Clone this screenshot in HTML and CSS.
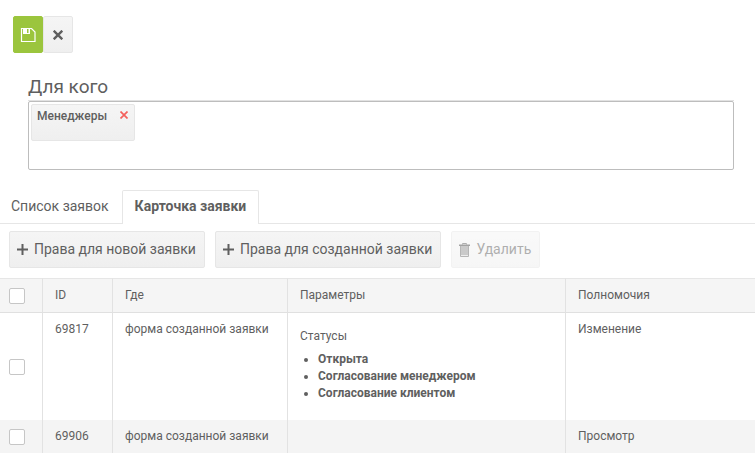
FILE: index.html
```html
<!DOCTYPE html>
<html lang="ru">
<head>
    <meta charset="UTF-8">
    <meta name="viewport" content="width=device-width, initial-scale=1.0">
    <title>Права доступа</title>
    <link rel="stylesheet" href="styles.css">
</head>
<body>
    <!-- сохранить / закрыть -->
    <div class="toolbar">
        <button class="btn btn-save" type="button" aria-label="Сохранить">
            <svg width="16" height="14" viewBox="0 0 16 14">
                <path d="M1.500 .5H11.500l3.500 3.500v9.500H1.500z" fill="none" stroke="#fff" stroke-width="1.200"/>
                <path d="M3 0h7v6H3z" fill="#fff"/>
                <path d="M7 1h1.500v4H7z" fill="#9bc53d"/>
            </svg>
        </button>
        <button class="btn btn-close" type="button" aria-label="Закрыть">
            <svg width="10" height="10" viewBox="0 0 10 10">
                <path d="M.7 .7l8.600 8.600M9.300 .7L.7 9.300" stroke="#5f5f5f" stroke-width="2.400"/>
            </svg>
        </button>
    </div>

    <!-- кому выдаются права -->
    <div class="target">
        <h1>Для кого</h1>
        <div class="target-box">
            <div class="chip">
                <span>Менеджеры</span>
                <button type="button" aria-label="Убрать">
                    <svg width="8" height="8" viewBox="0 0 8 8">
                        <path d="M.5 .5l7 7M7.500 .5l-7 7" stroke="#f4605c" stroke-width="1.700"/>
                    </svg>
                </button>
            </div>
        </div>
    </div>

    <div class="tabs">
        <a class="tab" href="#list">Список заявок</a>
        <a class="tab active" href="#card">Карточка заявки</a>
    </div>

    <div class="actions">
        <button class="btn" type="button">
            <svg width="11" height="11" viewBox="0 0 11 11">
                <path d="M0 5.500h11M5.500 0v11" stroke="#5f5f5f" stroke-width="2"/>
            </svg>
            Права для новой заявки
        </button>
        <button class="btn" type="button">
            <svg width="11" height="11" viewBox="0 0 11 11">
                <path d="M0 5.500h11M5.500 0v11" stroke="#5f5f5f" stroke-width="2"/>
            </svg>
            Права для созданной заявки
        </button>
        <button class="btn btn-delete" type="button" disabled>
            <svg width="11" height="14" viewBox="0 0 11 14">
                <path d="M3.500 1.500v-1h4v1" fill="none" stroke="#5f5f5f"/>
                <path d="M0 1.500h11V3H0z" fill="#4a4a4a"/>
                <path d="M1 3h9v9.500H1z" fill="#969696"/>
                <path d="M1.500 3v10.500h8V3" fill="none" stroke="#6f6f6f"/>
                <path d="M2 12.500h7" stroke="#ddd"/>
            </svg>
            Удалить
        </button>
    </div>

    <table class="grid">
        <colgroup>
            <col class="col-check">
            <col class="col-id">
            <col class="col-where">
            <col class="col-params">
            <col>
        </colgroup>
        <thead>
            <tr>
                <th class="check"><input type="checkbox" aria-label="Выбрать все"></th>
                <th>ID</th>
                <th>Где</th>
                <th>Параметры</th>
                <th>Полномочия</th>
            </tr>
        </thead>
        <tbody>
            <tr>
                <td class="check"><input type="checkbox" aria-label="Выбрать 69817"></td>
                <td>69817</td>
                <td>форма созданной заявки</td>
                <td>
                    <div class="params">
                        Статусы
                        <ul>
                            <li>Открыта</li>
                            <li>Согласование менеджером</li>
                            <li>Согласование клиентом</li>
                        </ul>
                    </div>
                </td>
                <td>Изменение</td>
            </tr>
            <tr>
                <td class="check"><input type="checkbox" aria-label="Выбрать 69906"></td>
                <td>69906</td>
                <td>форма созданной заявки</td>
                <td></td>
                <td>Просмотр</td>
            </tr>
        </tbody>
    </table>
</body>
</html>
```

FILE: styles.css
```css
* {
    margin: 0;
    padding: 0;
    box-sizing: border-box;
}

body {
    font-family: Roboto, "Liberation Sans", sans-serif;
    font-size: 12px;
    line-height: 17px;
    color: #5f5f5f;
    background-color: #fff;
}

/* кнопки */
.btn {
    display: flex;
    align-items: center;
    gap: 6px;
    height: 37px;
    padding: 0 8px 0 7px;
    font: inherit;
    font-size: 14px;
    color: inherit;
    white-space: nowrap;
    background: linear-gradient(#f5f5f5, #efefef);
    border: 1px solid #e6e6e6;
    border-radius: 2px;
}

.toolbar {
    display: flex;
    padding: 16px 13px 0;
}

.btn-save,
.btn-close {
    width: 30px;
    padding: 0;
    justify-content: center;
}

.btn-save {
    background: #9bc53d;
    border-color: #9bc53d;
}

.btn-delete {
    opacity: 0.5;
}

/* для кого */
.target {
    padding: 20px 21px 0 28px;
}

.target h1 {
    height: 28px;
    font-size: 19px;
    font-weight: normal;
    line-height: 27px;
    border-bottom: 1px solid #e2e2e2;
}

.target-box {
    min-height: 69px;
    padding: 2px;
    border: 1px solid #bdbdbd;
    border-radius: 2px;
}

.chip {
    display: inline-flex;
    align-items: flex-start;
    gap: 13px;
    height: 37px;
    padding: 3px 6px 0 5px;
    font-weight: 500;
    background: linear-gradient(#f5f5f5, #efefef);
    border: 1px solid #e6e6e6;
    border-radius: 2px;
}

.chip button {
    display: flex;
    padding-top: 3px;
    background: none;
    border: none;
}

/* вкладки */
.tabs {
    display: flex;
    margin-top: 20px;
    box-shadow: inset 0 -1px #e6e6e6;
}

.tab {
    height: 34px;
    padding: 0 12px;
    font-size: 14px;
    line-height: 30px;
    color: inherit;
    text-decoration: none;
    border: 1px solid transparent;
    border-bottom: none;
}

.tab:first-child {
    padding-left: 10px;
}

.tab.active {
    font-weight: bold;
    background-color: #fff;
    border-color: #e6e6e6;
    border-radius: 2px 2px 0 0;
}

.actions {
    display: flex;
    gap: 10px;
    padding: 7px 9px 10px;
}

/* таблица прав */
.grid {
    width: 100%;
    table-layout: fixed;
    border-collapse: separate;
    border-spacing: 0;
}

.col-check {
    width: 43px;
}

.col-id {
    width: 70px;
}

.col-where {
    width: 175px;
}

.col-params {
    width: 278px;
}

.grid th,
.grid td {
    padding: 8px 12px;
    text-align: left;
    vertical-align: top;
    border-right: 1px solid #e2e2e2;
}

.grid th:last-child,
.grid td:last-child {
    border-right: none;
}

.grid th {
    font-weight: normal;
    background-color: #f5f5f5;
    border-top: 1px solid #e6e6e6;
    border-bottom: 1px solid #e0e0e0;
}

.grid tbody tr:nth-child(even) {
    background-color: #f4f4f4;
}

.grid .check {
    padding: 0 9px;
    vertical-align: middle;
}

.check input {
    display: block;
    width: 16px;
    height: 16px;
    appearance: none;
    background-color: #fff;
    border: 1px solid #c6c6c6;
    border-radius: 2px;
}

.params {
    padding: 7px 0 10px;
}

.params ul {
    margin-top: 6px;
    padding-left: 18px;
    font-weight: bold;
}
```
